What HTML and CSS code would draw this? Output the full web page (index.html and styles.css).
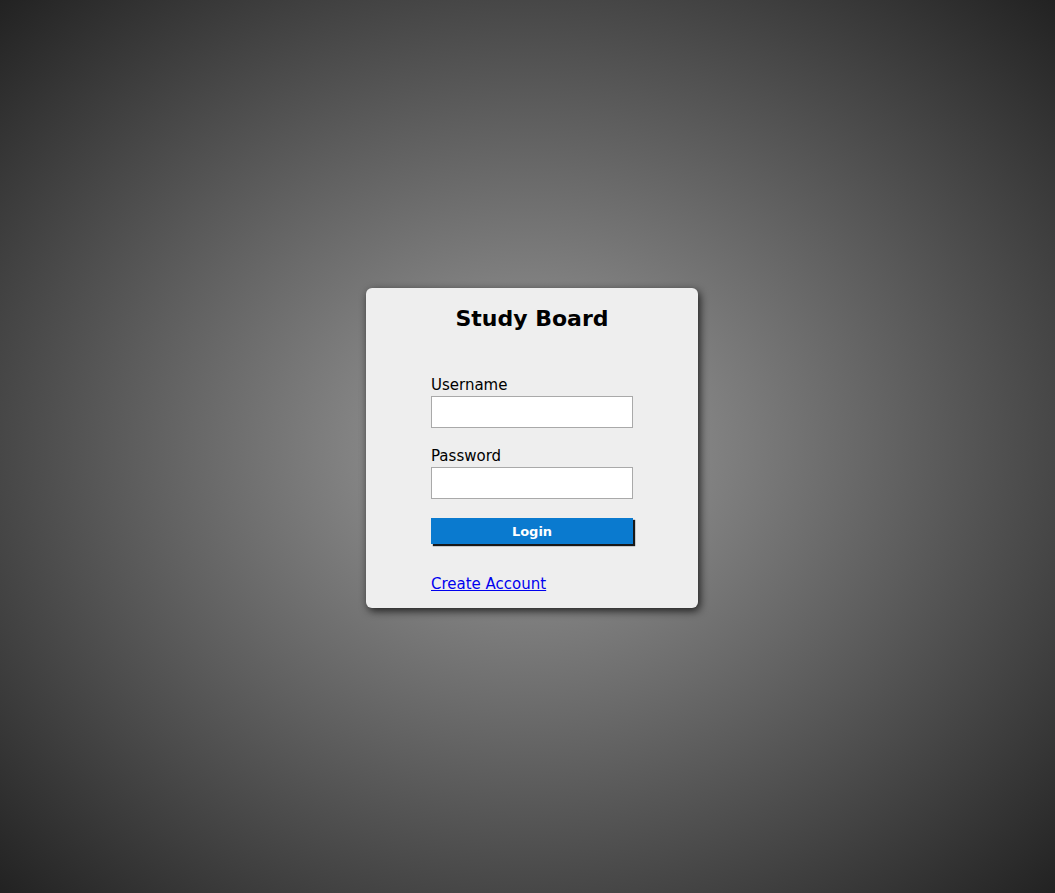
FILE: index.html
```html
<!DOCTYPE html>
<html>
<head>
<meta charset="utf-8">
<link rel="stylesheet" href="styles.css">
</head>
<body>
<div class="card">
  <h1 class="title">Study Board</h1>
  <form class="form">
    <label class="label" for="u">Username</label>
    <input class="input" id="u" type="text">
    <label class="label label-gap" for="p">Password</label>
    <input class="input" id="p" type="password">
    <button class="btn" type="button">Login</button>
    <a class="link" href="#">Create Account</a>
  </form>
</div>
</body>
</html>
```
FILE: styles.css
```css
html, body {
  margin: 0;
  height: 100%;
}
body {
  box-sizing: border-box;
  padding: 3px 0 0 9px;
  display: grid;
  place-items: center;
  background: radial-gradient(ellipse farthest-corner at center, #a0a0a0 0%, #222 100%);
  font-family: "DejaVu Sans", Verdana, sans-serif;
}
.card {
  box-sizing: border-box;
  width: 332px;
  height: 320px;
  background: #eeeeee;
  border-radius: 6px;
  box-shadow: 2px 3px 8px rgba(0,0,0,0.75);
  padding-top: 15px;
}
.title {
  margin: 0;
  text-align: center;
  font-size: 22px;
  font-weight: bold;
  line-height: 32px;
  color: #000;
}
.form {
  width: 202px;
  margin: 40px auto 0;
  display: flex;
  flex-direction: column;
  align-items: flex-start;
}
.label {
  font-size: 15px;
  line-height: 20px;
  color: #000;
  margin-bottom: 1px;
}
.label-gap {
  margin-top: 18px;
}
.input {
  box-sizing: border-box;
  width: 202px;
  height: 32px;
  margin: 0;
  border: 1px solid #a9a9a9;
  background: #fff;
}
.btn {
  box-sizing: border-box;
  width: 202px;
  height: 26px;
  margin-top: 19px;
  border: none;
  background: #0a7acf;
  color: #fff;
  font-family: inherit;
  font-size: 13px;
  font-weight: bold;
  box-shadow: 2px 2px 1px rgba(0,0,0,0.9);
  padding: 0;
}
.link {
  margin-top: 30px;
  font-size: 15px;
  line-height: 20px;
  color: #0000ee;
  text-decoration: underline;
}
```
